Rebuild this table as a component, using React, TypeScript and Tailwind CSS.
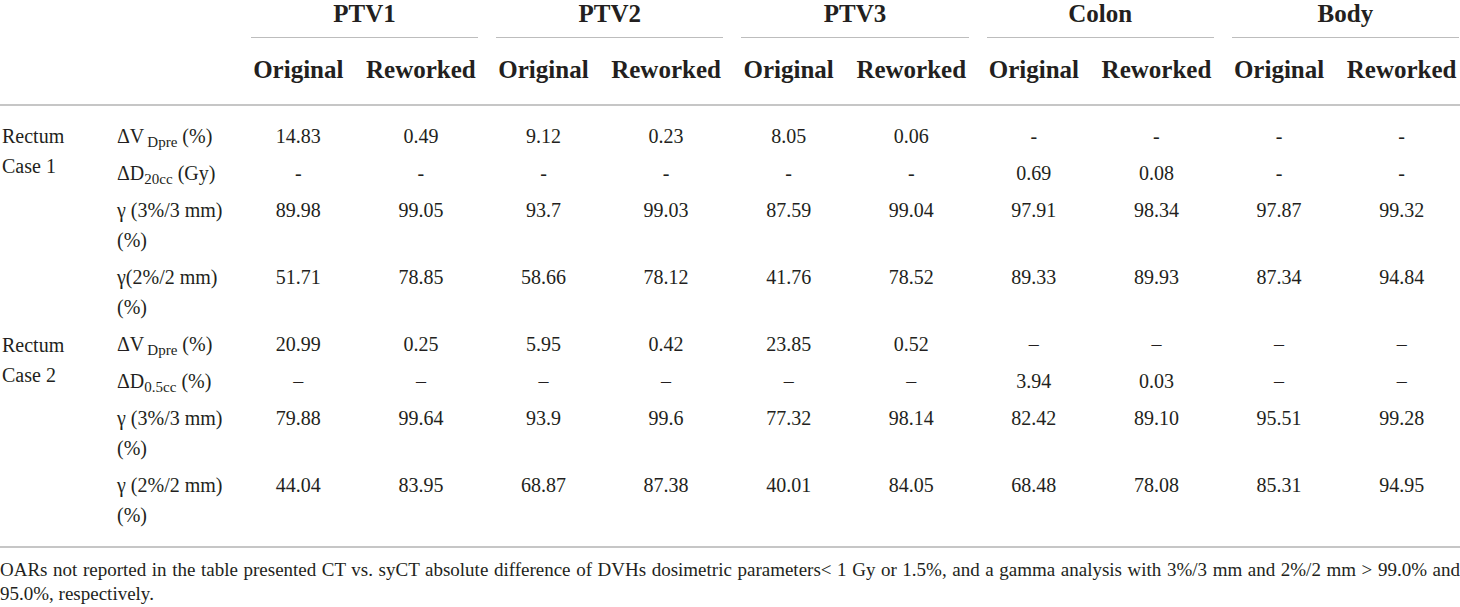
const groups = ['PTV1', 'PTV2', 'PTV3', 'Colon', 'Body'];

type Row = { metric: React.ReactNode; vals: string[] };

const cases: { label: string[]; rows: Row[] }[] = [
  {
    label: ['Rectum', 'Case 1'],
    rows: [
      {
        metric: <>ΔV<sub className="ml-[3px]">Dpre</sub> (%)</>,
        vals: ['14.83', '0.49', '9.12', '0.23', '8.05', '0.06', '-', '-', '-', '-'],
      },
      {
        metric: <>ΔD<sub>20cc</sub> (Gy)</>,
        vals: ['-', '-', '-', '-', '-', '-', '0.69', '0.08', '-', '-'],
      },
      {
        metric: <>γ (3%/3 mm)<br />(%)</>,
        vals: ['89.98', '99.05', '93.7', '99.03', '87.59', '99.04', '97.91', '98.34', '97.87', '99.32'],
      },
      {
        metric: <>γ(2%/2 mm)<br />(%)</>,
        vals: ['51.71', '78.85', '58.66', '78.12', '41.76', '78.52', '89.33', '89.93', '87.34', '94.84'],
      },
    ],
  },
  {
    label: ['Rectum', 'Case 2'],
    rows: [
      {
        metric: <>ΔV<sub className="ml-[3px]">Dpre</sub> (%)</>,
        vals: ['20.99', '0.25', '5.95', '0.42', '23.85', '0.52', '–', '–', '–', '–'],
      },
      {
        metric: <>ΔD<sub>0.5cc</sub> (%)</>,
        vals: ['–', '–', '–', '–', '–', '–', '3.94', '0.03', '–', '–'],
      },
      {
        metric: <>γ (3%/3 mm)<br />(%)</>,
        vals: ['79.88', '99.64', '93.9', '99.6', '77.32', '98.14', '82.42', '89.10', '95.51', '99.28'],
      },
      {
        metric: <>γ (2%/2 mm)<br />(%)</>,
        vals: ['44.04', '83.95', '68.87', '87.38', '40.01', '84.05', '68.48', '78.08', '85.31', '94.95'],
      },
    ],
  },
];

export default function App() {
  return (
    <div className="w-[1460px] h-[607px] overflow-hidden bg-white text-[#231f20] font-['Liberation_Serif',serif]">
      <table className="w-[1463px] table-fixed border-collapse">
        <colgroup>
          <col className="w-[113px]" />
          <col className="w-[124px]" />
          {Array.from({ length: 10 }).map((_, i) => (
            <col key={i} className="w-[122.6px]" />
          ))}
        </colgroup>
        <thead>
          <tr>
            <th colSpan={2} />
            {groups.map((g) => (
              <th key={g} colSpan={2} className="p-0 align-top">
                <div className="ml-[14px] mr-[4px] pb-[9px] border-b border-[#bdbdbd] text-center text-[25px] font-bold leading-[28px]">
                  {g}
                </div>
              </th>
            ))}
          </tr>
          <tr>
            <th colSpan={2} className="border-b-2 border-[#c6c6c6]" />
            {groups.map((g) => (
              <>
                <th key={g + 'o'} className="pt-[17px] pb-[19px] border-b-2 border-[#c6c6c6] text-center text-[25px] font-bold leading-[30px] whitespace-nowrap">
                  Original
                </th>
                <th key={g + 'r'} className="pt-[17px] pb-[19px] border-b-2 border-[#c6c6c6] text-center text-[25px] font-bold leading-[30px] whitespace-nowrap">
                  Reworked
                </th>
              </>
            ))}
          </tr>
        </thead>
        <tbody className="text-[20px] leading-[30px]">
          {cases.map((c, ci) =>
            c.rows.map((r, ri) => {
              const first = ci === 0 && ri === 0;
              const last = ci === cases.length - 1 && ri === c.rows.length - 1;
              const pad = `${first ? 'pt-[15px]' : 'pt-[4px]'} ${last ? 'pb-[16px] border-b-2 border-[#c6c6c6]' : 'pb-[3px]'}`;
              return (
                <tr key={ci + '-' + ri}>
                  {ri === 0 && (
                    <td rowSpan={4} className={`${first ? 'pt-[15px]' : 'pt-[4px]'} pl-[2px] align-top border-b-2 ${ci === cases.length - 1 ? 'border-[#c6c6c6]' : 'border-transparent'}`}>
                      {c.label[0]}
                      <br />
                      {c.label[1]}
                    </td>
                  )}
                  <td className={`${pad} pl-[4px] align-top whitespace-nowrap`}>{r.metric}</td>
                  {r.vals.map((v, vi) => (
                    <td key={vi} className={`${pad} text-center align-top`}>
                      {v}
                    </td>
                  ))}
                </tr>
              );
            })
          )}
        </tbody>
      </table>
      <p className="pt-[10px] text-[19px] leading-[24px] text-justify">
        OARs not reported in the table presented CT vs. syCT absolute difference of DVHs dosimetric parameters&lt; 1 Gy or 1.5%, and a gamma analysis with 3%/3 mm and 2%/2 mm &gt; 99.0% and 95.0%, respectively.
      </p>
    </div>
  );
}
